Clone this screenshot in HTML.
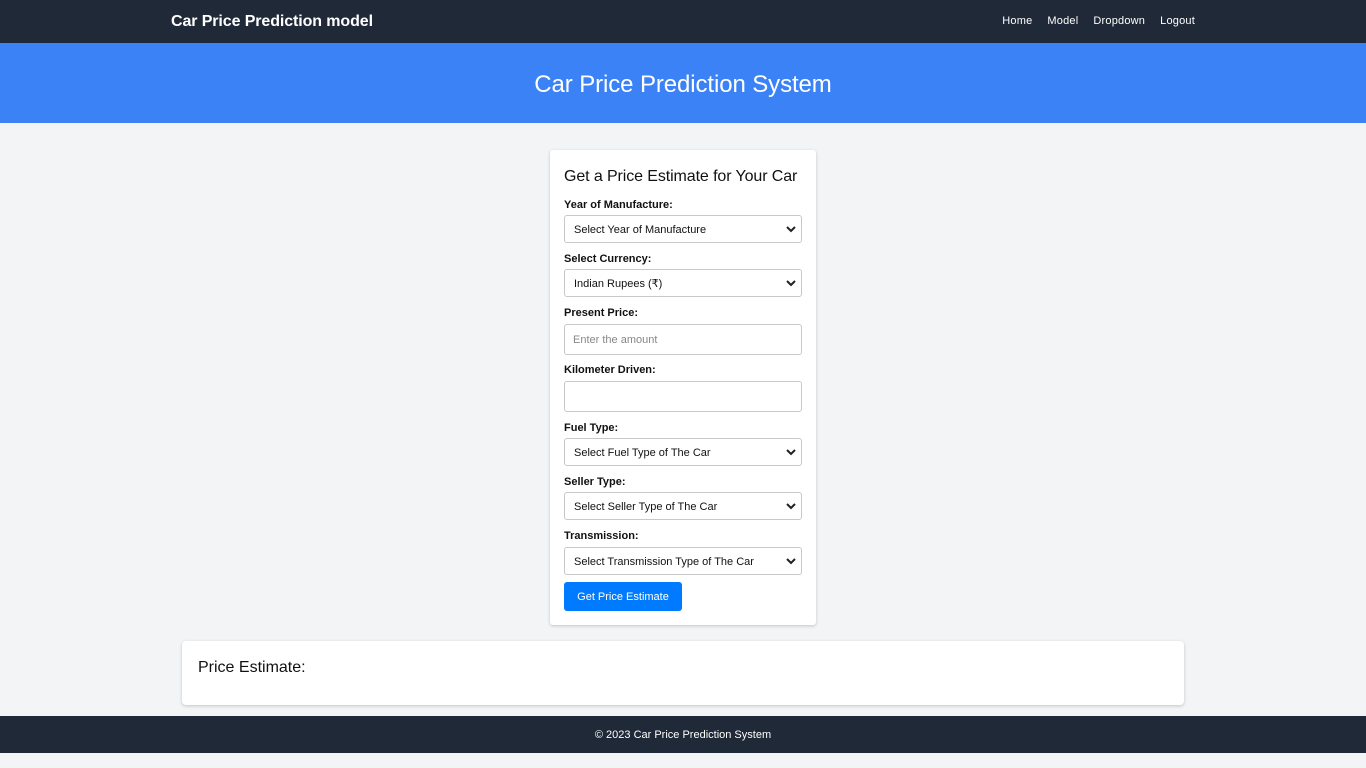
<!DOCTYPE html>
<html><head><meta charset="utf-8"><style>
*{box-sizing:border-box;margin:0;padding:0}
body{width:1366px;height:768px;background:#f3f4f6;font-family:"Liberation Sans",sans-serif;color:#111;overflow:hidden;position:relative}
.nav{height:43px;background:#1f2937;position:relative;color:#fff}
.brand{position:absolute;left:171px;top:13px;font-size:16px;font-weight:bold;letter-spacing:-0.1px}
.links{position:absolute;right:171px;top:15px;font-size:11px;letter-spacing:0.2px}
.links span{margin-left:15px}
.hero{height:80px;background:#3b82f6;color:#fff;text-align:center;font-size:24px;line-height:83px;letter-spacing:-0.1px}
.card{position:absolute;left:550px;top:150px;width:266px;height:475px;background:#fff;border-radius:3px;box-shadow:0 1px 3px rgba(0,0,0,.2)}
.card>*{position:absolute;left:14px;width:238px}
h2{font-size:16px;font-weight:normal;top:18px;white-space:nowrap;letter-spacing:-0.1px}
label{display:block;font-size:11px;font-weight:bold;white-space:nowrap;margin-top:2px}
.sel{height:28px;border:1px solid #c8c8c8;border-radius:3px;font-size:11px;padding:0 9px;line-height:29px}
.sel svg{position:absolute;right:5px;top:9px}
.inp{height:31px;border:1px solid #c8c8c8;border-radius:3px;font-size:11px;padding:0 8px;line-height:30px;color:#888}
.btn{width:118px!important;height:29px;background:#007bff;color:#fff;font-size:11px;line-height:30px;text-align:center;border-radius:3px}
.res{position:absolute;left:182px;top:641px;width:1002px;height:64px;background:#fff;border-radius:4px;box-shadow:0 1px 3px rgba(0,0,0,.2);padding:18px 16px;font-size:16px}
.foot{position:absolute;left:0;top:716px;width:1366px;height:37px;background:#1f2937;color:#fff;font-size:11px;text-align:center;line-height:39px}
</style></head><body>
<div class="nav"><div class="brand">Car Price Prediction model</div>
<div class="links"><span>Home</span><span>Model</span><span>Dropdown</span><span>Logout</span></div></div>
<div class="hero">Car Price Prediction System</div>
<div class="card">
<h2>Get a Price Estimate for Your Car</h2>
<label style="top:47px">Year of Manufacture:</label>
<div class="sel" style="top:65px">Select Year of Manufacture<svg width="10" height="8" viewBox="0 0 10 8"><path d="M1 2l4 4 4-4" stroke="#222" stroke-width="2" fill="none"/></svg></div>
<label style="top:101px">Select Currency:</label>
<div class="sel" style="top:119px">Indian Rupees (₹)<svg width="10" height="8" viewBox="0 0 10 8"><path d="M1 2l4 4 4-4" stroke="#222" stroke-width="2" fill="none"/></svg></div>
<label style="top:155px">Present Price:</label>
<div class="inp" style="top:174px">Enter the amount</div>
<label style="top:212px">Kilometer Driven:</label>
<div class="inp" style="top:231px"></div>
<label style="top:270px">Fuel Type:</label>
<div class="sel" style="top:288px">Select Fuel Type of The Car<svg width="10" height="8" viewBox="0 0 10 8"><path d="M1 2l4 4 4-4" stroke="#222" stroke-width="2" fill="none"/></svg></div>
<label style="top:324px">Seller Type:</label>
<div class="sel" style="top:342px">Select Seller Type of The Car<svg width="10" height="8" viewBox="0 0 10 8"><path d="M1 2l4 4 4-4" stroke="#222" stroke-width="2" fill="none"/></svg></div>
<label style="top:378px">Transmission:</label>
<div class="sel" style="top:397px">Select Transmission Type of The Car<svg width="10" height="8" viewBox="0 0 10 8"><path d="M1 2l4 4 4-4" stroke="#222" stroke-width="2" fill="none"/></svg></div>
<div class="btn" style="top:432px">Get Price Estimate</div>
</div>
<div class="res">Price Estimate:</div>
<div class="foot">© 2023 Car Price Prediction System</div>
</body></html>
